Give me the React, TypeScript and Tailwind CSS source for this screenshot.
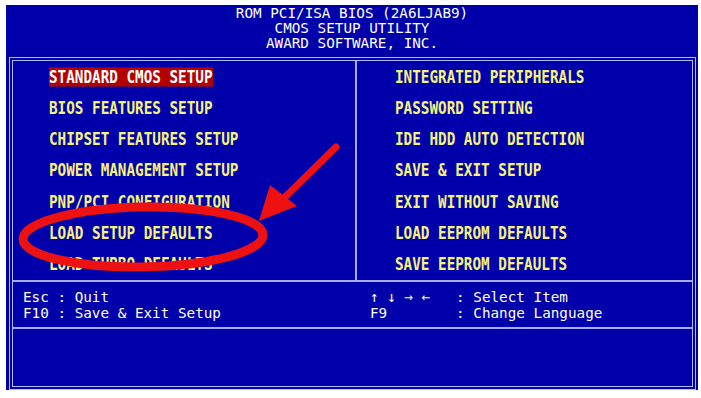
import React from 'react';

const FONT = { fontFamily: '"DejaVu Sans Mono", "Liberation Mono", monospace' };

const leftItems = [
  'STANDARD CMOS SETUP',
  'BIOS FEATURES SETUP',
  'CHIPSET FEATURES SETUP',
  'POWER MANAGEMENT SETUP',
  'PNP/PCI CONFIGURATION',
  'LOAD SETUP DEFAULTS',
  'LOAD TURBO DEFAULTS',
];

const rightItems = [
  'INTEGRATED PERIPHERALS',
  'PASSWORD SETTING',
  'IDE HDD AUTO DETECTION',
  'SAVE & EXIT SETUP',
  'EXIT WITHOUT SAVING',
  'LOAD EEPROM DEFAULTS',
  'SAVE EEPROM DEFAULTS',
];

/* ── One menu line ── */
function Item({ label, active }: { label: string; active?: boolean }) {
  return (
    <div className="h-[31.3px] flex items-center">
      <span
        className={
          'inline-block scale-y-[1.2] leading-none whitespace-pre font-bold ' +
          (active ? 'bg-[#b40000] text-white py-[1px]' : 'text-[#f6f27c]')
        }
      >
        {label}
      </span>
    </div>
  );
}

function Line({ text, h }: { text: string; h: string }) {
  return (
    <div className={h + ' flex items-center'}>
      <span className="inline-block scale-y-[1.03] leading-none whitespace-pre">{text}</span>
    </div>
  );
}

export default function App() {
  return (
    <div className="w-[701px] h-[398px] bg-white relative overflow-hidden" style={FONT}>
      <div className="ml-[6px] mt-[5px] w-[692px] h-[385px] bg-[#0000aa] flex flex-col text-[14.3px]">
        {/* ── Header ── */}
        <div className="h-[52px] pt-[1px] flex flex-col items-center text-white">
          <Line h="h-[15px]" text="ROM PCI/ISA BIOS (2A6LJAB9)" />
          <Line h="h-[15px]" text="CMOS SETUP UTILITY" />
          <Line h="h-[15px]" text="AWARD SOFTWARE, INC." />
        </div>

        {/* ── Frame ── */}
        <div className="ml-[3px] mr-[2px] flex-1 border-[4px] border-double border-[#b8b8ff] flex flex-col">
          <div className="flex border-b-2 border-[#a8a8ff]">
            <div className="w-[344px] pl-[36px] border-r-2 border-[#a8a8ff]">
              {leftItems.map((l, i) => (
                <Item key={l} label={l} active={i === 0} />
              ))}
            </div>
            <div className="flex-1 pl-[38px]">
              {rightItems.map((l) => (
                <Item key={l} label={l} />
              ))}
            </div>
          </div>

          <div className="h-[47px] flex text-white border-b-2 border-[#a8a8ff] pt-[7px]">
            <div className="w-[346px] pl-[10px]">
              <Line h="h-[16px]" text="Esc : Quit" />
              <Line h="h-[16px]" text="F10 : Save & Exit Setup" />
            </div>
            <div className="flex-1 pl-[11px]">
              <Line h="h-[16px]" text="↑ ↓ → ←   : Select Item" />
              <Line h="h-[16px]" text="F9        : Change Language" />
            </div>
          </div>

          <div className="flex-1" />
        </div>
      </div>

      {/* ── Red annotation ── */}
      <svg className="absolute left-0 top-0 pointer-events-none" width="701" height="398" viewBox="0 0 701 398">
        <ellipse cx="143" cy="237" rx="120" ry="30" fill="none" stroke="#ee1111" strokeWidth="9" transform="rotate(-1 143 237)" />
        <line x1="336" y1="147" x2="280" y2="202" stroke="#ee1111" strokeWidth="7" strokeLinecap="round" />
        <polygon points="259,221 270,185 297,206" fill="#ee1111" />
      </svg>
    </div>
  );
}
